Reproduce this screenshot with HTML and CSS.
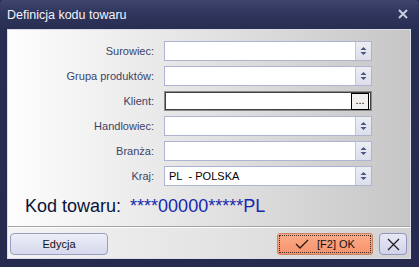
FILE: index.html
```html
<!DOCTYPE html>
<html lang="pl">
<head>
  <meta charset="UTF-8" />
  <meta name="viewport" content="width=device-width, initial-scale=1" />
  <title>Definicja kodu towaru</title>
  <link rel="stylesheet" href="styles.css">
</head>
<body>
  <div class="window">
    <div class="titlebar">
      <span class="title">Definicja kodu towaru</span>
      <svg class="title-close" width="10" height="10" viewBox="0 0 10 10">
        <path d="M1 1 L9 9 M9 1 L1 9" stroke="#c9cde2" stroke-width="2" />
      </svg>
    </div>

    <div class="panel">
      <div class="form">
        <div class="fields">
          <label class="lbl">Surowiec:</label>
          <div class="combo">
            <span class="val"></span>
            <span class="spin">
              <svg width="7" height="10" viewBox="0 0 7 10"><path d="M0.5 4 L3.5 1 L6.5 4 Z M0.5 6 L3.5 9 L6.5 6 Z" fill="#4b5382" /></svg>
            </span>
          </div>

          <label class="lbl">Grupa produktów:</label>
          <div class="combo">
            <span class="val"></span>
            <span class="spin">
              <svg width="7" height="10" viewBox="0 0 7 10"><path d="M0.5 4 L3.5 1 L6.5 4 Z M0.5 6 L3.5 9 L6.5 6 Z" fill="#4b5382" /></svg>
            </span>
          </div>

          <label class="lbl">Klient:</label>
          <div class="combo combo-focus">
            <span class="val"></span>
            <span class="dots">...</span>
          </div>

          <label class="lbl">Handlowiec:</label>
          <div class="combo">
            <span class="val"></span>
            <span class="spin">
              <svg width="7" height="10" viewBox="0 0 7 10"><path d="M0.5 4 L3.5 1 L6.5 4 Z M0.5 6 L3.5 9 L6.5 6 Z" fill="#4b5382" /></svg>
            </span>
          </div>

          <label class="lbl">Branża:</label>
          <div class="combo">
            <span class="val"></span>
            <span class="spin">
              <svg width="7" height="10" viewBox="0 0 7 10"><path d="M0.5 4 L3.5 1 L6.5 4 Z M0.5 6 L3.5 9 L6.5 6 Z" fill="#4b5382" /></svg>
            </span>
          </div>

          <label class="lbl">Kraj:</label>
          <div class="combo">
            <span class="val">PL&nbsp; - POLSKA</span>
            <span class="spin">
              <svg width="7" height="10" viewBox="0 0 7 10"><path d="M0.5 4 L3.5 1 L6.5 4 Z M0.5 6 L3.5 9 L6.5 6 Z" fill="#4b5382" /></svg>
            </span>
          </div>
        </div>

        <div class="code">
          <span class="code-label">Kod towaru:</span>
          <span class="code-value">****00000*****PL</span>
        </div>
      </div>

      <div class="buttons">
        <button class="btn btn-edit">Edycja</button>
        <div class="spacer"></div>
        <button class="btn btn-ok">
          <svg width="14" height="10" viewBox="0 0 14 10"><path d="M1 5 L5 9 L13 1" fill="none" stroke="#2a1a10" stroke-width="1.3" /></svg>
          <span>[F2] OK</span>
        </button>
        <button class="btn btn-close">
          <svg width="13" height="13" viewBox="0 0 13 13"><path d="M1 1 L12 12 M12 1 L1 12" stroke="#1a1a1a" stroke-width="1.2" /></svg>
        </button>
      </div>
    </div>
  </div>
</body>
</html>
```

FILE: styles.css
```css
body {
  margin: 0;
  font-family: "Liberation Sans", Arial, sans-serif;
  background: #252a4e;
}

.window {
  width: 419px;
  height: 267px;
  box-sizing: border-box;
  display: flex;
  flex-direction: column;
  background: linear-gradient(#40476f 0, #30365e 12px, #282d52 29px, #252a4e 100%);
  border-radius: 4px 4px 0 0;
  overflow: hidden;
}

.titlebar {
  height: 29px;
  display: flex;
  align-items: center;
  justify-content: space-between;
  padding: 0 11px 0 7px;
  box-sizing: border-box;
}

.title {
  color: #f4f5fa;
  font-size: 12.5px;
  margin-top: 1px;
}

.title-close {
  margin-top: -2px;
}

.panel {
  flex: 1;
  margin: 0 8px 8px 7px;
  border: 1px solid #dcdce4;
  display: flex;
  flex-direction: column;
}

.form {
  flex: 1;
  padding-top: 11px;
  background: linear-gradient(to right, #fdfdfd, #e2e2e2 50%, #c6c6c6);
  border-bottom: 1px solid #a4a4a8;
}

.fields {
  display: grid;
  grid-template-columns: 146px 208px;
  grid-auto-rows: 20px;
  column-gap: 10px;
  row-gap: 5px;
}

.lbl {
  text-align: right;
  align-self: center;
  font-size: 11px;
  color: #3b4468;
}

.combo {
  display: flex;
  background: #fff;
  border: 1px solid #aeb4d0;
  box-sizing: border-box;
}

.combo .val {
  flex: 1;
  font-size: 11px;
  color: #000;
  padding-left: 4px;
  line-height: 18px;
}

.spin {
  width: 15px;
  display: flex;
  align-items: center;
  justify-content: center;
  background: linear-gradient(#eceef5, #dcdfeb);
  border-left: 1px solid #c3c7da;
}

.combo-focus {
  border: 1px solid #8a8a8a;
  box-shadow: inset 0 0 0 1px #404040;
  padding: 1px 2px 1px 0;
}

.dots {
  width: 16px;
  height: 15px;
  border: 1px solid #000;
  background: #f0f0f0;
  font-size: 11px;
  line-height: 13px;
  text-align: center;
  color: #000;
}

.code {
  margin-top: 9px;
  padding-left: 17px;
  font-size: 18px;
  line-height: 22px;
}

.code-label {
  color: #0a1238;
  margin-right: 4px;
}

.code-value {
  color: #1628b0;
}

.buttons {
  height: 31px;
  box-sizing: border-box;
  display: flex;
  align-items: flex-start;
  gap: 6px;
  padding: 5px 3px 0 2px;
  border-top: 1px solid #ffffff;
  background: linear-gradient(to right, #f4f4f4, #e4e4e4 50%, #d2d2d2);
}

.spacer {
  flex: 1;
}

.btn {
  height: 22px;
  box-sizing: border-box;
  font-family: "Liberation Sans", Arial, sans-serif;
  font-size: 11px;
  color: #111;
  border-radius: 4px;
  padding: 0;
  display: flex;
  align-items: center;
  justify-content: center;
}

.btn-edit {
  width: 98px;
  background: linear-gradient(#eceef8, #d6d8ec);
  border: 1px solid #9a9ec0;
}

.btn-ok {
  width: 96px;
  gap: 8px;
  background: linear-gradient(#fbab88, #f6936c);
  border: 1px solid #c98467;
  outline: 1px dotted #3a2a20;
  outline-offset: -3px;
  border-radius: 3px;
}

.btn-close {
  width: 28px;
  background: linear-gradient(#e8e9f6, #d0d3ea);
  border: 1px solid #9096bc;
}
```
